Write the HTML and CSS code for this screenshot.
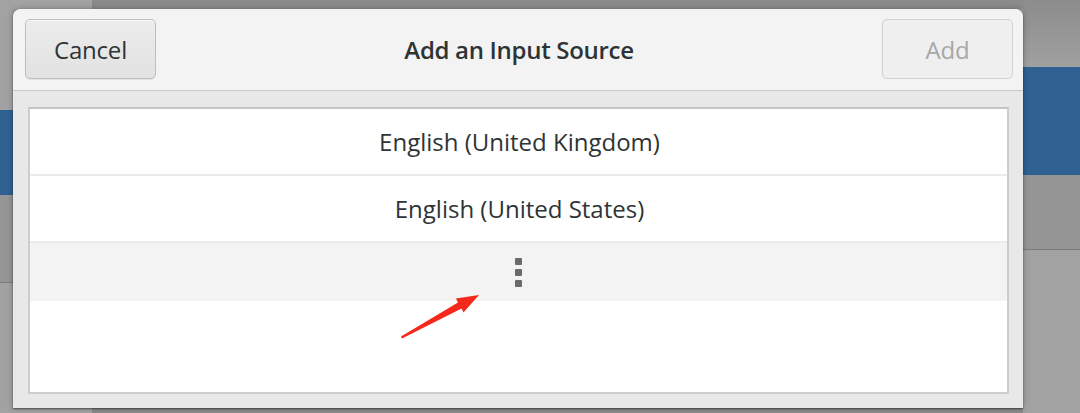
FILE: index.html
```html
<!DOCTYPE html>
<html>
<head>
<meta charset="utf-8">
<link rel="stylesheet" href="styles.css">
</head>
<body>
<div class="desktop">
  <div class="side side-left">
    <div class="band gray-a h110"></div>
    <div class="band blue h85"></div>
    <div class="band gray-b h87"></div>
    <div class="band gray-c grow"></div>
  </div>
  <div class="center">
    <div class="topstrip">
      <div class="ts-left"></div>
      <div class="ts-right"></div>
    </div>
    <div class="dialog">
      <div class="header">
        <button class="btn">Cancel</button>
        <div class="title">Add an Input Source</div>
        <button class="btn disabled">Add</button>
      </div>
      <div class="body">
        <div class="list">
          <div class="row">English (United Kingdom)</div>
          <div class="row">English (United States)</div>
          <div class="row more">
            <span class="dots"><i></i><i></i><i></i></span>
          </div>
          <div class="filler"></div>
        </div>
      </div>
    </div>
    <div class="botstrip">
      <div class="ts-left"></div>
      <div class="ts-right"></div>
    </div>
    <svg class="arrow" width="100" height="60" viewBox="0 0 100 60">
      <path d="M14 44.5 L71 10.5 L68.9 6.5 L92 3 L76.5 20.5 L74.6 16.5 L15 46.5 Z" fill="#f5281c"/>
    </svg>
  </div>
  <div class="side side-right">
    <div class="band gray-d h67"></div>
    <div class="band blue h108"></div>
    <div class="band gray-b h74"></div>
    <div class="band gray-c grow"></div>
  </div>
</div>
</body>
</html>
```
FILE: styles.css
```css
html, body {
  margin: 0;
  padding: 0;
}
body {
  width: 1080px;
  height: 413px;
  overflow: hidden;
  background: #9c9c9c;
  font-family: "Open Sans", "Noto Sans", sans-serif;
}
.desktop {
  display: flex;
  width: 1080px;
  height: 413px;
}
.side {
  display: flex;
  flex-direction: column;
}
.side-left { width: 13px; }
.side-right { width: 57px; }
.band { flex: none; }
.grow { flex: 1; }
.h110 { height: 110px; }
.h85 { height: 85px; }
.h87 { height: 87px; }
.h67 { height: 67px; }
.h108 { height: 108px; }
.h74 { height: 74px; }
.gray-a { background: #a2a2a2; }
.gray-b { background: #959595; border-bottom: 1px solid #7c7c7c; }
.gray-c { background: #a2a2a2; }
.gray-d { background: linear-gradient(#8c8c8c, #a0a0a0); }
.blue { background: #2f6192; }

.center {
  position: relative;
  width: 1010px;
  display: flex;
  flex-direction: column;
}
.topstrip, .botstrip {
  display: flex;
  flex: none;
}
.topstrip { height: 9px; }
.botstrip { flex: 1; }
.ts-left { width: 79px; background: #a3a3a3; border-right: 1px solid #8a8a8a; }
.ts-right { flex: 1; background: #8b8b8b; }

.dialog {
  position: relative;
  z-index: 1;
  height: 399px;
  display: flex;
  flex-direction: column;
  border-radius: 8px 8px 0 0;
  background: #e8e8e8;
  box-shadow: 0 1px 2px rgba(0,0,0,0.45), 0 0 6px rgba(0,0,0,0.25);
  overflow: hidden;
}
.header {
  flex: none;
  background: #f3f3f3;
  border-bottom: 1px solid #c9c9c9;
  display: flex;
  align-items: center;
  justify-content: space-between;
  padding: 0 10px 0 12px;
  box-sizing: border-box;
  height: 82px;
}
.btn {
  width: 131px;
  height: 60px;
  margin-top: -1px;
  border: 1px solid #bdbdbd;
  border-radius: 5px;
  background: linear-gradient(#ececec, #e2e2e2);
  box-shadow: inset 0 1px 0 #f8f8f8, 0 1px 0 rgba(0,0,0,0.06);
  color: #2e3436;
  font-family: "Open Sans", "Noto Sans", sans-serif;
  font-size: 24px;
  padding: 0;
  letter-spacing: -0.2px;
}
.btn.disabled {
  background: #efefef;
  border-color: #d2d2d2;
  box-shadow: none;
  color: #a6a8a8;
}
.title {
  color: #2e3436;
  font-size: 24px;
  font-weight: 600;
  letter-spacing: -0.3px;
  margin-top: -1px;
}
.body {
  flex: 1;
  padding: 16px 14px 14px 15px;
  display: flex;
}
.list {
  flex: 1;
  display: flex;
  flex-direction: column;
  background: #fff;
  border: 2px solid #cdcdcd;
  border-top-color: #c4c4c4;
}
.row {
  height: 65px;
  flex: none;
  border-bottom: 2px solid #ebebeb;
  display: flex;
  align-items: center;
  justify-content: center;
  color: #2e3436;
  font-size: 24px;
  letter-spacing: 0;
  padding-left: 2px;
}
.row.more {
  height: 58px;
  border-bottom: none;
  background: #f3f3f3;
  padding-left: 0;
}
.dots {
  display: flex;
  flex-direction: column;
  gap: 4px;
}
.dots i {
  display: block;
  width: 7px;
  height: 7px;
  background: #6a6a6a;
  border-radius: 1px;
}
.filler { flex: 1; }

.arrow {
  position: absolute;
  left: 374px;
  top: 292px;
  z-index: 2;
}
```
